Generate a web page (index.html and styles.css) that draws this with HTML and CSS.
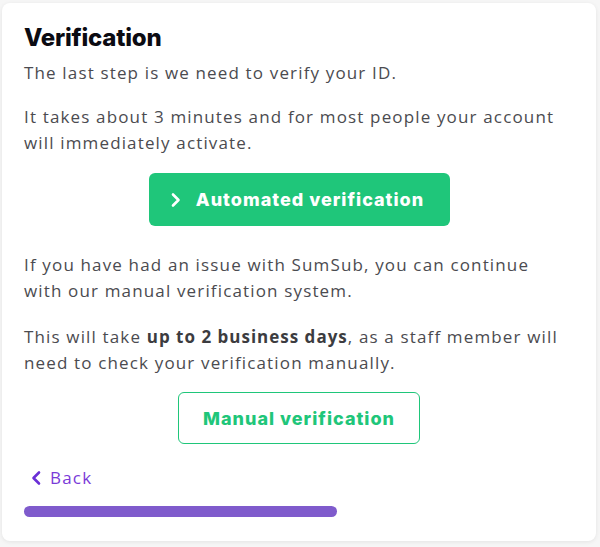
FILE: index.html
```html
<!DOCTYPE html>
<html>
<head>
<meta charset="utf-8">
<link rel="stylesheet" href="styles.css">
</head>
<body>
<div class="page">
  <div class="card">
    <h1 class="title">Verification</h1>
    <p class="text">The last step is we need to verify your ID.</p>
    <p class="text">It takes about 3 minutes and for most people your account will immediately activate.</p>
    <div class="btn-row first">
      <button class="btn btn-primary">
        <svg class="chev" width="12" height="16" viewBox="0 0 12 16"><path d="M3 2.5 L8.5 8 L3 13.5" fill="none" stroke="#fff" stroke-width="2.6" stroke-linecap="round" stroke-linejoin="round"/></svg>
        <span>Automated verification</span>
      </button>
    </div>
    <p class="text">If you have had an issue with SumSub, you can continue with our manual verification system.</p>
    <p class="text later">This will take <b>up to 2 business days</b>, as a staff member will need to check your verification manually.</p>
    <div class="btn-row second">
      <button class="btn btn-outline">Manual verification</button>
    </div>
    <a class="back" href="#">
      <svg width="12" height="16" viewBox="0 0 12 16"><path d="M9 2.5 L3.5 8 L9 13.5" fill="none" stroke="#6a2fd6" stroke-width="2.6" stroke-linecap="round" stroke-linejoin="round"/></svg>
      <span>Back</span>
    </a>
    <div class="progress"><div class="progress-fill" style="width:313px"></div></div>
  </div>
</div>
</body>
</html>
```
FILE: styles.css
```css
html, body { margin: 0; padding: 0; background: #f6f6f6; }
.page { padding: 3px 4px 6px 2px; }
.card {
  background: #fff;
  border-radius: 8px;
  box-shadow: 0 1px 4px rgba(0,0,0,0.08);
  padding: 20px 36px 22px 22px;
  height: 496px;
  font-family: "Open Sans", "Noto Sans", sans-serif;
  color: #4b4b50;
}
.title {
  margin: 0 0 7px 0;
  font-family: "Inter", "Lato", sans-serif;
  font-weight: 800;
  font-size: 24px;
  line-height: 30px;
  color: #0b0b12;
  letter-spacing: -0.2px;
}
.text {
  margin: 0 0 18px 0;
  font-size: 17px;
  line-height: 26px;
  letter-spacing: 1.15px;
}
.text.later { margin-top: 20px; }
.text b { font-weight: 700; color: #3c3c40; letter-spacing: 1px; }
.btn-row { display: flex; justify-content: center; margin-right: -14px; }
.btn-row.first { margin-top: -1px; margin-bottom: 26px; }
.btn-row.second { margin-top: -2px; }
.btn {
  font-family: "Inter", "Lato", sans-serif;
  font-weight: 800;
  font-size: 18px;
  letter-spacing: 1px;
  border-radius: 6px;
  cursor: pointer;
  display: flex;
  align-items: center;
  justify-content: center;
}
.btn-primary {
  background: #1fc67a;
  color: #fff;
  border: none;
  width: 301px;
  height: 53px;
  gap: 14px;
  padding-right: 10px;
}
.btn-outline {
  background: #fff;
  color: #1fc67a;
  border: 1px solid #1fc67a;
  width: 242px;
  height: 52px;
}
.back {
  display: flex;
  align-items: center;
  gap: 8px;
  margin: 23px 0 0 6px;
  color: #7a3ad8;
  text-decoration: none;
  font-size: 17px;
  line-height: 22px;
  letter-spacing: 1.2px;
}
.progress { margin-top: 17px; height: 11px; }
.progress-fill { height: 11px; background: #7f5bcc; border-radius: 6px; }
```
